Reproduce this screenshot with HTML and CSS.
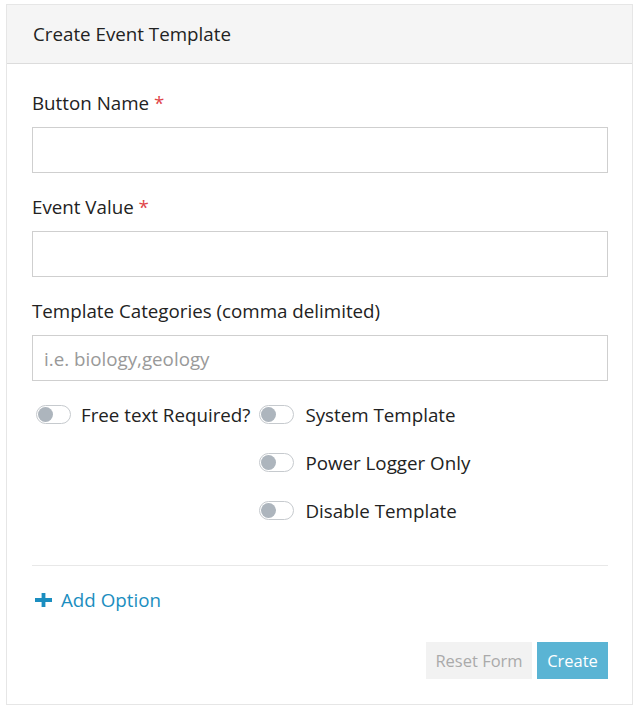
FILE: index.html
```html
<!DOCTYPE html>
<html>
<head>
<meta charset="utf-8">
<link rel="stylesheet" href="styles.css">
</head>
<body>
<div class="card">
  <div class="card-header">Create Event Template</div>
  <div class="card-body">
    <div class="field">
      <label class="label">Button Name <span class="req">*</span></label>
      <div class="input"></div>
    </div>
    <div class="field">
      <label class="label">Event Value <span class="req">*</span></label>
      <div class="input"></div>
    </div>
    <div class="field">
      <label class="label">Template Categories (comma delimited)</label>
      <div class="input placeholder">i.e. biology,geology</div>
    </div>
    <div class="toggles">
      <div class="col col1">
        <div class="trow"><span class="switch"><span class="knob"></span></span><span class="tlabel">Free text Required?</span></div>
      </div>
      <div class="col col2">
        <div class="trow"><span class="switch"><span class="knob"></span></span><span class="tlabel">System Template</span></div>
        <div class="trow"><span class="switch"><span class="knob"></span></span><span class="tlabel">Power Logger Only</span></div>
        <div class="trow"><span class="switch"><span class="knob"></span></span><span class="tlabel">Disable Template</span></div>
      </div>
    </div>
    <hr class="divider">
    <div class="add-option">
      <svg class="plus" width="17" height="14" viewBox="0 0 17 14"><path d="M6.6 0h3.8v5.1H17v3.8h-6.6V14H6.6V8.9H0V5.1h6.6z" fill="currentColor"/></svg>
      <span>Add Option</span>
    </div>
    <div class="actions">
      <button class="btn btn-reset">Reset Form</button>
      <button class="btn btn-create">Create</button>
    </div>
  </div>
</div>
</body>
</html>
```

FILE: styles.css
```css
html, body {
  margin: 0;
  padding: 0;
  background: #fff;
}
body {
  font-family: "Open Sans", "Noto Sans", sans-serif;
  color: #222;
  padding: 4px 0 0 6px;
}
.card {
  width: 627px;
  height: 701px;
  border: 1px solid #e6e6e6;
  box-sizing: border-box;
  display: flex;
  flex-direction: column;
}
.card-header {
  height: 59px;
  background: #f5f5f5;
  border-bottom: 1px solid #dcdcdc;
  box-sizing: border-box;
  padding-left: 26px;
  display: flex;
  align-items: center;
  font-size: 18.75px;
  line-height: 26px;
  color: #222;
}
.card-body {
  padding: 5px 24px 0 25px;
  display: flex;
  flex-direction: column;
}
.field {
  display: flex;
  flex-direction: column;
}
.label {
  font-size: 18.75px;
  line-height: 26px;
  margin-top: 21px;
  margin-bottom: 11px;
  color: #222;
}
.req {
  color: #e0454a;
}
.input {
  height: 46px;
  border: 1px solid #cfcfcf;
  box-sizing: border-box;
  font-size: 18.75px;
  display: flex;
  align-items: center;
  padding-left: 11px;
}
.placeholder {
  color: #999;
}
.toggles {
  display: flex;
  margin-top: 22px;
  gap: 9px;
}
.col {
  display: flex;
  flex-direction: column;
  gap: 26px;
}
.trow {
  display: flex;
  align-items: center;
  height: 22px;
  font-size: 18.75px;
  color: #222;
  white-space: nowrap;
}
.col1 .trow {
  padding-left: 4px;
}
.switch {
  width: 35px;
  height: 19px;
  border: 1px solid #c6cace;
  border-radius: 10px;
  box-sizing: border-box;
  display: flex;
  align-items: center;
  padding-left: 1px;
  margin-right: 10px;
  background: #fff;
}
.col2 .switch {
  margin-right: 11px;
}
.knob {
  width: 15px;
  height: 15px;
  border-radius: 50%;
  background: #adb5bd;
}
.divider {
  border: 0;
  border-top: 1px solid #e8e8e8;
  margin: 44px 0 0;
}
.add-option {
  display: flex;
  align-items: center;
  color: #1b8ec0;
  font-size: 18.75px;
  line-height: 26px;
  margin-top: 21px;
  padding-left: 3px;
  gap: 9px;
}
.plus {
  width: 17px;
  height: 14px;
}
.actions {
  display: flex;
  justify-content: flex-end;
  gap: 5px;
  margin-top: 29px;
}
.btn {
  font-family: "Open Sans", sans-serif;
  font-size: 16.5px;
  border: 0;
  height: 37px;
  padding: 0;
  white-space: nowrap;
}
.btn-reset {
  background: #f2f2f2;
  color: #aaa;
  width: 106px;
}
.btn-create {
  background: #5ab4d4;
  color: #fff;
  width: 71px;
}
```
